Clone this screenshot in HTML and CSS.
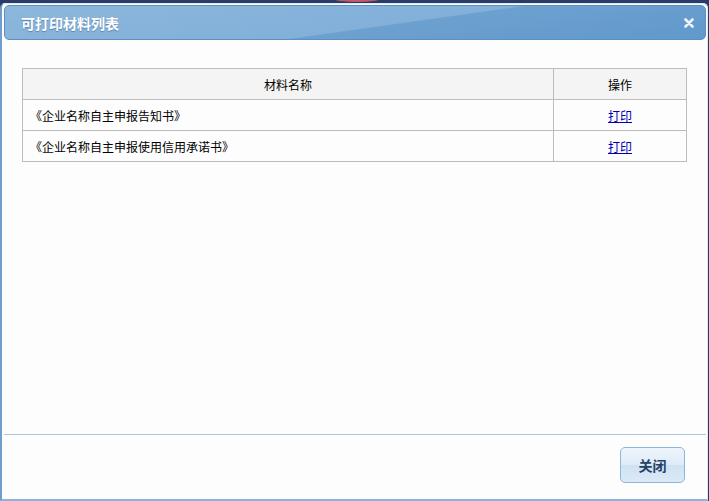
FILE: index.html
```html
<!DOCTYPE html>
<html lang="zh-CN">

<head>
    <meta charset="UTF-8">
    <meta name="viewport" content="width=device-width, initial-scale=1.0">
    <title>可打印材料列表</title>
    <link rel="stylesheet" href="styles.css">
</head>

<body>

    <div class="backdrop-mark"></div>

    <div class="dialog">
        <div class="dialog-title">
            <span>可打印材料列表</span>
            <a class="close-icon" href="#" title="关闭">
                <svg width="10" height="10" viewBox="0 0 10 10">
                    <path d="M1.5 1.5 L8.5 8.5 M8.5 1.5 L1.5 8.5" stroke="#eef3f8" stroke-width="2.6" stroke-linecap="round" />
                </svg>
            </a>
        </div>

        <div class="dialog-body">
            <table class="material-table">
                <thead>
                    <tr>
                        <th class="col-name">材料名称</th>
                        <th class="col-op">操作</th>
                    </tr>
                </thead>
                <tbody>
                    <tr>
                        <td>《企业名称自主申报告知书》</td>
                        <td class="col-op"><a href="#">打印</a></td>
                    </tr>
                    <tr>
                        <td>《企业名称自主申报使用信用承诺书》</td>
                        <td class="col-op"><a href="#">打印</a></td>
                    </tr>
                </tbody>
            </table>
        </div>

        <div class="dialog-footer">
            <button class="close-button">关闭</button>
        </div>
    </div>

</body>

</html>
```

FILE: styles.css
```css
body {
    font-family: "Noto Sans CJK SC", "Liberation Sans", sans-serif;
    font-size: 12px;
    background-color: #2a3c68;
    margin: 0;
    padding: 0;
    height: 501px;
    overflow: hidden;
}

.backdrop-mark {
    position: absolute;
    left: 334px;
    top: -4px;
    width: 46px;
    height: 6px;
    border-radius: 50%;
    background: #c45a66;
}

.dialog {
    position: relative;
    box-sizing: border-box;
    height: 498px;
    margin: 3px 1px 0 0;
    background: #fdfdfd;
    border: 1px solid #dfe8f1;
    border-left: 2px solid #6f9dcc;
    border-bottom: 2px solid #8db4d8;
    border-radius: 5px 5px 0 0;
    padding: 1px 1px 0 2px;
    display: flex;
    flex-direction: column;
}

.dialog-title {
    height: 35px;
    box-sizing: border-box;
    border: 1px solid #5d8fc2;
    border-radius: 5px;
    background: linear-gradient(172deg, #8db7dc 0%, #82b0d9 55%, #6ca0cf 56%, #6199cc 100%);
    display: flex;
    align-items: center;
    justify-content: space-between;
    padding: 0 10px 0 16px;
}

.dialog-title span {
    color: #fff;
    font-size: 14px;
    font-weight: bold;
    text-shadow: 0 1px 1px rgba(40, 80, 130, 0.5);
}

.close-icon {
    display: flex;
    width: 12px;
    height: 12px;
    align-items: center;
    justify-content: center;
}

.dialog-body {
    flex: 1;
    padding: 28px 19px 0 18px;
}

.material-table {
    width: 100%;
    border-collapse: collapse;
    color: #000;
}

.material-table th,
.material-table td {
    border: 1px solid #bcbcbc;
    height: 30px;
    padding: 0 7px;
    font-size: 12px;
    font-weight: normal;
}

.material-table th {
    background: #f4f4f4;
    text-align: center;
}

.material-table td {
    background: #fdfdfd;
}

.material-table .col-op {
    width: 118px;
    text-align: center;
}

.material-table a {
    color: #0000b0;
    text-decoration: underline;
}

.dialog-footer {
    height: 65px;
    border-top: 1px solid #a9c8e1;
    display: flex;
    justify-content: flex-end;
    align-items: flex-start;
    padding: 12px 21px 0 0;
    box-sizing: border-box;
}

.close-button {
    width: 65px;
    height: 36px;
    border: 1px solid #8eb6d9;
    border-radius: 5px;
    background: linear-gradient(#eef5fb 0%, #deebf7 50%, #cfe2f3 51%, #dbe9f6 100%);
    color: #234266;
    font-family: "Noto Sans CJK SC", sans-serif;
    font-size: 14px;
    font-weight: bold;
    cursor: pointer;
}
```
